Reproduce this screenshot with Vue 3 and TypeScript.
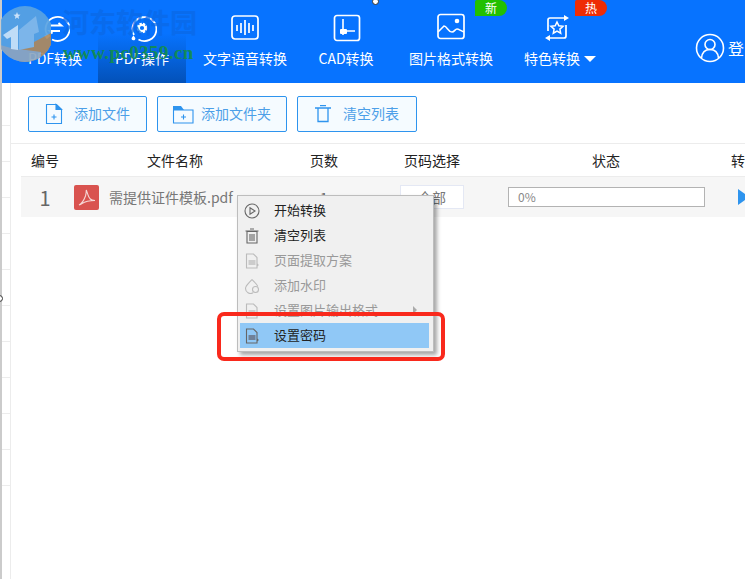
<template>
  <div class="page">
    <div class="edge"></div>
    <div class="window">
      <header class="topbar">
        <div
          v-for="tab in tabs"
          :key="tab.key"
          class="tab"
          :class="{ active: tab.key === 'op' }"
          :style="{ width: tab.width + 'px' }"
        >
          <svg class="tab-icon" :class="{ shifted: tab.key === 'special' }" width="30" height="30" viewBox="0 0 30 30" fill="none" stroke="#fff" stroke-width="1.8">
            <template v-if="tab.key === 'pdf'">
              <path d="M7 21.500A12 12 0 1 1 12 26.500" />
              <path d="M10.500 12.500h11l-3-2.500M20 18h-10.500l3 2.500" />
              <path d="M5.500 23l2-1.500 1.500 1.500-2 2z" fill="#fff" />
            </template>
            <template v-else-if="tab.key === 'op'">
              <path d="M7 22A12 12 0 1 1 11.500 26.500" />
              <circle cx="15" cy="15" r="4" stroke-width="2.600" stroke-dasharray="2.200 1" />
              <circle cx="15" cy="15" r="3" stroke-width="1.800" />
              <path d="M6.500 22.500c1.500 1.800 2.300 2.800 1.600 4a2 2 0 0 1-3.400-.2c-.5-1.200.6-2.400 1.800-3.800z" fill="#fff" stroke="none" />
            </template>
            <template v-else-if="tab.key === 'voice'">
              <rect x="2" y="3" width="26" height="23" rx="3" stroke-width="1.700" />
              <path d="M7 12v6M11 10v10M15 7v15M19 10v10M23 12v6" stroke-width="1.700" />
            </template>
            <template v-else-if="tab.key === 'cad'">
              <rect x="3.500" y="2.500" width="25" height="25" rx="2.500" stroke-width="1.700" />
              <path d="M12 6v16M12 18h12" stroke-width="1.600" />
              <rect x="9" y="16" width="7" height="5" rx="1" fill="#fff" stroke="none" />
            </template>
            <template v-else-if="tab.key === 'img'">
              <rect x="2" y="1.500" width="26" height="24" rx="2.500" stroke-width="1.700" />
              <circle cx="21" cy="8" r="2.300" fill="#fff" stroke="none" />
              <path d="M2 19l6-6c3 0 4 6 8 6 2.500 0 3-3 5-3s3 1.500 7 3" stroke-width="1.600" />
            </template>
            <template v-else>
              <path d="M24 5H8a2 2 0 0 0-2 2v11M6 25h16a2 2 0 0 0 2-2V12" stroke-width="1.700" />
              <path d="M22 2l5 3-5 3zM8 22l-5 3 5 3z" fill="#fff" stroke="none" />
              <path d="M15 9l1.800 3.800 4.200.5-3.100 2.800.8 4.100-3.700-2.100-3.700 2.100.8-4.100-3.100-2.800 4.200-.5z" stroke-width="1.500" />
            </template>
          </svg>
          <span class="tab-label">{{ tab.label }}<i v-if="tab.key === 'special'" class="caret"></i></span>
          <b v-if="tab.badge" class="badge" :class="tab.badgeClass">{{ tab.badge }}</b>
        </div>
        <div class="user">
          <svg width="30" height="30" viewBox="0 0 30 30" fill="none" stroke="#fff" stroke-width="1.600">
            <circle cx="15" cy="15" r="13.500" />
            <circle cx="15" cy="11.500" r="5" />
            <path d="M6.500 25c.5-5 3.500-8.500 8.500-8.500s8 3.500 8.500 8.500" />
          </svg>
          <span>登</span>
        </div>
      </header>

      <div class="workspace">
        <div class="sheet">
          <div v-for="n in 11" :key="n" class="sheet-cell"></div>
        </div>
        <main class="content">
          <div class="toolbar">
            <button class="tool">
              <svg width="18" height="22" viewBox="0 0 18 22" fill="none" stroke="#2e94ee" stroke-width="1.100">
                <path d="M1.500 1.500h10l5 5v14h-15z" />
                <path d="M11 1.500l5.500 5h-5.500z" fill="#2e94ee" />
                <path d="M6.500 14h5M9 11.500v5" />
              </svg>
              <span class="tool-text">添加文件</span>
            </button>
            <button class="tool tool-folder">
              <svg width="22" height="19" viewBox="0 0 22 19" fill="none" stroke="#2e94ee" stroke-width="1.100">
                <path d="M1.500 5h19.500v13h-19.500z" />
                <path d="M1 1h8l3 4h-11z" fill="#2e94ee" stroke="none" />
                <path d="M9 12h5M11.500 9.500v5" />
              </svg>
              <span class="tool-text">添加文件夹</span>
            </button>
            <button class="tool tool-clear">
              <svg width="16" height="18" viewBox="0 0 16 18" fill="none" stroke="#2e94ee" stroke-width="1.300">
                <path d="M0 3h16M5 .7h6" />
                <path d="M3 3v13.500h10v-13.500" />
              </svg>
              <span class="tool-text">清空列表</span>
            </button>
          </div>

          <div class="grid head">
            <div v-for="col in columns" :key="col" class="head-cell">{{ col }}</div>
          </div>

          <div class="grid row">
            <div class="num">1</div>
            <div class="file">
              <svg class="pdf" width="25" height="25" viewBox="0 0 25 25">
                <rect width="25" height="25" rx="2" fill="#d9534f" />
                <path d="M5 20c3-1.500 5-5 6.500-9 .6-2 .8-4 .8-6 1 2.500 2 7 4 9 1 1 3 1.500 4.700 1.500-4 0-10 1-13 3-1 .7-2 1.200-3 1.500z" fill="none" stroke="#f6d8d6" stroke-width="1.100" />
              </svg>
              <span>需提供证件模板.pdf</span>
            </div>
            <div class="pages">1</div>
            <div class="range"><div class="range-box">全部</div></div>
            <div class="state"><div class="progress">0%</div></div>
            <div class="go"><i class="play"></i></div>
          </div>
        </main>
      </div>
    </div>

    <!-- watermark over the top bar -->
    <svg class="logo" width="50" height="60" viewBox="0 0 50 60">
      <defs>
        <clipPath id="logo-clip"><circle cx="24" cy="30" r="28" /></clipPath>
      </defs>
      <g clip-path="url(#logo-clip)">
        <rect x="-4" y="0" width="56" height="60" fill="#5aa3e2" />
        <path d="M18 46L52 28V60H18z" fill="#b08a5e" />
        <path d="M-4 40L10 44 40 48V62H-4z" fill="#8fa7c0" />
        <path d="M18 26L35 12 38 28 33 30v13l-15 3z" fill="#86bbe9" />
        <path d="M2 31L17 21v25l-7-1V33l-4 2z" fill="#dcecf9" opacity=".9" />
      </g>
      <path d="M16 8l1 2.500 2.500.3-2 1.700.6 2.500-2.100-1.400-2.100 1.400.6-2.500-2-1.700 2.500-.3z" fill="#dcecf9" />
    </svg>
    <div class="mark-name">河东软件园</div>
    <div class="mark-url">www.pc0359.cn</div>

    <i class="handle handle-top"></i>
    <i class="handle handle-left"></i>

    <ul class="menu">
      <li v-for="item in menu" :key="item.label" class="menu-item" :class="{ off: item.off, hot: item.hot }">
        <svg class="menu-icon" width="16" height="16" viewBox="0 0 16 16" fill="none" :stroke="item.off ? '#bbb' : '#666'" stroke-width="1.100">
          <template v-if="item.icon === 'play'">
            <circle cx="8" cy="8" r="7" />
            <path d="M6 4.800l5 3.200-5 3.200z" />
          </template>
          <template v-else-if="item.icon === 'trash'">
            <path d="M1.500 3h13M6 1h4" />
            <path d="M3 3.500h10v11.500h-10zM6 6v7M8 6v7M10 6v7" />
          </template>
          <template v-else-if="item.icon === 'drop'">
            <path d="M8 1.500C5 5 1.500 7.500 1.500 10.500a5 5 0 0 0 7.500 4.300" />
            <path d="M8 1.500c2 2.300 5 4.500 5.800 7" />
            <circle cx="11.500" cy="11.500" r="3" />
          </template>
          <template v-else>
            <path d="M2.500 1h7l3.500 3.500v10.500h-10.500z" />
            <path d="M4.500 7h7v5h-7z" :fill="item.off ? '#ccc' : '#6f8199'" stroke="none" />
            <path d="M13 10.500l2 1.500-2 1.500z" :fill="item.off ? '#bbb' : '#666'" stroke="none" />
          </template>
        </svg>
        <span class="menu-text">{{ item.label }}</span>
        <i v-if="item.more" class="more"></i>
      </li>
    </ul>
    <div class="callout"></div>
  </div>
</template>

<script setup lang="ts">
interface Tab {
  key: string;
  label: string;
  width: number;
  badge?: string;
  badgeClass?: string;
}

interface MenuItem {
  label: string;
  icon: string;
  off?: boolean;
  more?: boolean;
  hot?: boolean;
}

const tabs: Tab[] = [
  { key: 'pdf', label: 'PDF转换', width: 96 },
  { key: 'op', label: 'PDF操作', width: 88 },
  { key: 'voice', label: '文字语音转换', width: 118 },
  { key: 'cad', label: 'CAD转换', width: 84 },
  { key: 'img', label: '图片格式转换', width: 126, badge: '新', badgeClass: 'green' },
  { key: 'special', label: '特色转换', width: 92, badge: '热', badgeClass: 'red' },
];

const columns = ['编号', '文件名称', '页数', '页码选择', '状态', '转'];

const menu: MenuItem[] = [
  { label: '开始转换', icon: 'play' },
  { label: '清空列表', icon: 'trash' },
  { label: '页面提取方案', icon: 'doc', off: true },
  { label: '添加水印', icon: 'drop', off: true },
  { label: '设置图片输出格式', icon: 'doc', off: true, more: true },
  { label: '设置密码', icon: 'doc', hot: true },
];
</script>

<style>
html,
body {
  margin: 0;
  overflow: hidden;
}
</style>

<style scoped>
.page {
  position: relative;
  display: flex;
  width: 745px;
  height: 579px;
  overflow: hidden;
  background: #fff;
  font-family: "Noto Sans CJK SC", "Noto Sans", sans-serif;
}

.edge {
  width: 2px;
  flex: none;
  background: #cbcbcb;
}

.window {
  flex: 1;
  min-width: 0;
  display: flex;
  flex-direction: column;
}

.topbar {
  flex: none;
  display: flex;
  height: 83px;
  background: #0773ff;
  color: #fff;
}

.tab {
  position: relative;
  flex: none;
  display: flex;
  flex-direction: column;
  align-items: center;
  padding-top: 13px;
  box-sizing: border-box;
}

.tab:first-child {
  padding-left: 10px;
}

.tab.active {
  background: linear-gradient(#0773ff 40%, #0351b8);
}

.tab-icon {
  display: block;
}

.tab-icon.shifted {
  margin-right: 7px;
}

.tab-label {
  margin-top: 5px;
  font-size: 14px;
  line-height: 21px;
  white-space: nowrap;
}

.caret {
  display: inline-block;
  margin-left: 4px;
  border: 6px solid transparent;
  border-top: 6px solid #fff;
  border-bottom: 0;
  vertical-align: 2px;
}

.badge {
  position: absolute;
  top: 0;
  right: 7px;
  width: 32px;
  height: 16px;
  border-radius: 2px 9px 9px 0;
  font-size: 12px;
  font-weight: 400;
  line-height: 16px;
  text-align: center;
}

.badge.green {
  right: 7px;
  background: #22c000;
}

.badge.red {
  right: -1px;
  background: #ee2c05;
}

.user {
  display: flex;
  align-items: center;
  gap: 3px;
  height: 30px;
  margin: 33px 0 0 89px;
  font-size: 16px;
  white-space: nowrap;
}

.user svg {
  flex: none;
}

.workspace {
  flex: 1;
  display: flex;
  min-height: 0;
}

.sheet {
  flex: none;
  width: 8px;
  padding-top: 7px;
  border-right: 1px solid #ececec;
}

.sheet-cell {
  height: 35px;
  border-bottom: 1px solid #ececec;
}

.content {
  flex: 1;
  min-width: 0;
}

.toolbar {
  display: flex;
  gap: 10px;
  height: 61px;
  padding: 13px 0 0 17px;
  box-sizing: border-box;
  border-bottom: 1px solid #ececec;
}

.tool {
  display: flex;
  align-items: center;
  width: 119px;
  height: 36px;
  padding: 0 0 0 16px;
  box-sizing: border-box;
  border: 1px solid #2e94ee;
  border-radius: 2px;
  background: #f5fbff;
  color: #4c9fe8;
  font-family: inherit;
  font-size: 14px;
}

.tool-folder {
  width: 130px;
  padding-left: 14px;
}

.tool-clear {
  width: 120px;
  padding-left: 17px;
}

.tool-text {
  margin-left: 11px;
  padding-bottom: 2px;
  white-space: nowrap;
}

.tool-folder .tool-text {
  margin-left: 7px;
}

.tool-clear .tool-text {
  margin-left: 12px;
}

.grid {
  display: grid;
  grid-template-columns: 48px 212px 86px 130px 218px 46px;
  margin-left: 10px;
}

.head {
  height: 33px;
}

.head-cell {
  height: 32px;
  border-bottom: 1px solid #ececec;
  color: #222;
  font-size: 14px;
  line-height: 32px;
  text-align: center;
  white-space: nowrap;
}

.row {
  height: 40px;
  align-items: center;
  background: #f6f6f6;
}

.num {
  color: #666;
  font-size: 20px;
  text-align: center;
}

.file {
  display: flex;
  align-items: center;
  gap: 10px;
  padding-left: 5px;
  color: #777;
  font-size: 14px;
  white-space: nowrap;
}

.pdf {
  flex: none;
}

.pages {
  color: #666;
  font-size: 14px;
  text-align: center;
}

.range {
  display: flex;
  padding-left: 33px;
}

.range-box {
  width: 64px;
  height: 24px;
  box-sizing: border-box;
  border: 1px solid #e4e8f4;
  background: #fff;
  color: #777;
  font-size: 14px;
  line-height: 22px;
  text-align: center;
}

.state {
  padding-left: 11px;
}

.progress {
  width: 197px;
  height: 20px;
  padding-left: 9px;
  box-sizing: border-box;
  border: 1px solid #b3b3b3;
  background: #fff;
  color: #888;
  font-size: 12px;
  line-height: 18px;
}

.go {
  padding-left: 23px;
}

.play {
  display: block;
  width: 0;
  height: 0;
  border-top: 8px solid transparent;
  border-bottom: 8px solid transparent;
  border-left: 11px solid #2e94ee;
}

.logo {
  position: absolute;
  top: 4px;
  left: 1px;
  opacity: 0.92;
}

.mark-name {
  position: absolute;
  top: 3px;
  left: 62px;
  color: #0a69e6;
  font-family: "Noto Sans CJK SC", serif;
  font-size: 27px;
  font-weight: 700;
  line-height: 38px;
  opacity: 0.75;
  white-space: nowrap;
}

.mark-url {
  position: absolute;
  top: 43px;
  left: 63px;
  color: #118a5a;
  font-family: "Liberation Serif", serif;
  font-size: 19px;
  font-weight: 700;
  letter-spacing: 0.4px;
  line-height: 20px;
  white-space: nowrap;
}

.handle {
  position: absolute;
  width: 7px;
  height: 7px;
  box-sizing: border-box;
  border: 1px solid #333;
  border-radius: 50%;
  background: #fff;
}

.handle-top {
  top: -2px;
  left: 372px;
}

.handle-left {
  top: 295px;
  left: -4px;
}

.menu {
  position: absolute;
  top: 195px;
  left: 237px;
  width: 197px;
  height: 157px;
  margin: 0;
  padding: 2px 4px 0 2px;
  box-sizing: border-box;
  list-style: none;
  border: 1px solid #bdbdbd;
  background: #f0f0f0;
  box-shadow: 3px 3px 4px rgba(0, 0, 0, 0.35);
}

.menu-item {
  position: relative;
  display: flex;
  align-items: center;
  height: 25px;
  padding-left: 4px;
  color: #222;
  font-size: 13px;
  white-space: nowrap;
}

.menu-item.off {
  color: #999;
}

.menu-item.hot {
  background: #90c8f6;
}

.menu-icon {
  flex: none;
  margin-right: 14px;
}

.menu-text {
  padding-bottom: 2px;
}

.more {
  position: absolute;
  top: 8px;
  right: 12px;
  border: 4px solid transparent;
  border-left: 4px solid #aaa;
  border-right: 0;
}

.callout {
  position: absolute;
  top: 312px;
  left: 217px;
  width: 228px;
  height: 49px;
  box-sizing: border-box;
  border: 4px solid #f9291c;
  border-radius: 7px;
}
</style>
